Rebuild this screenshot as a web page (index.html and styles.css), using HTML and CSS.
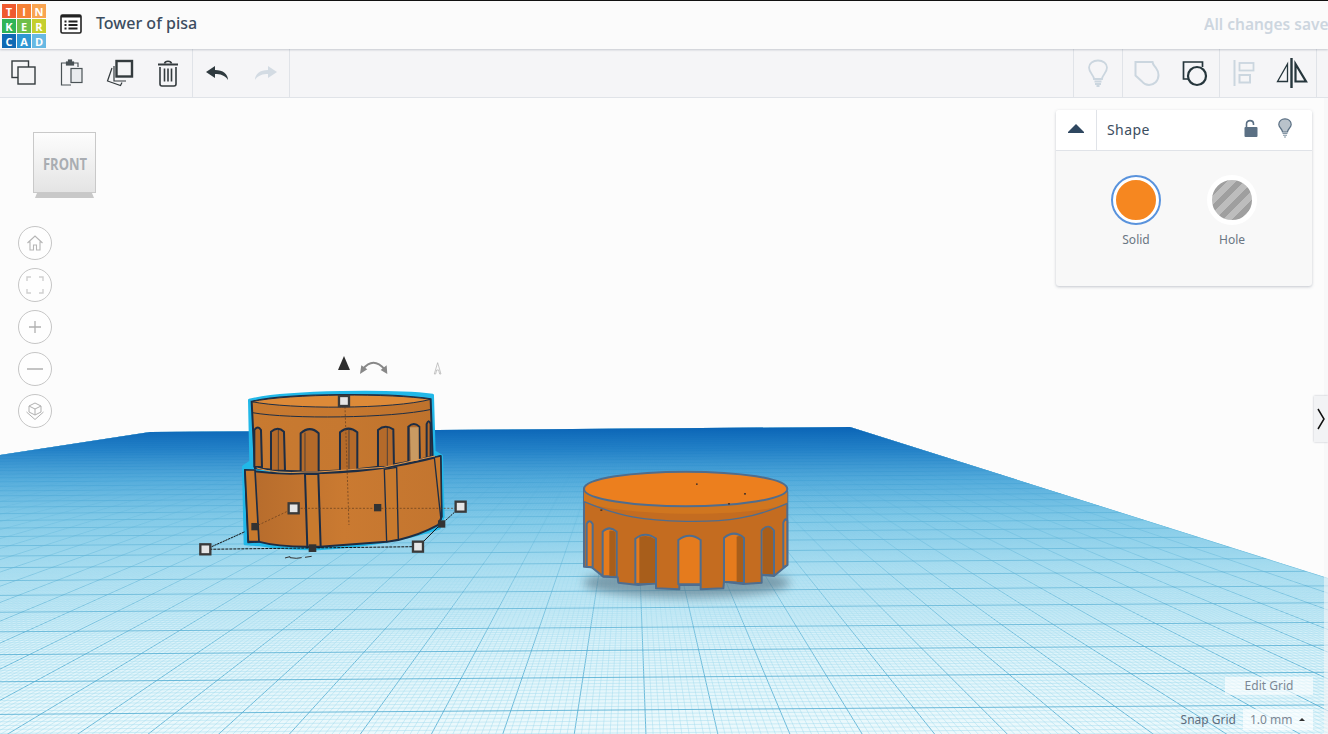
FILE: index.html
```html
<!DOCTYPE html>
<html lang="en">
<head>
<meta charset="utf-8">
<title>Tower of pisa</title>
<link rel="stylesheet" href="styles.css">
</head>
<body>
<div class="app">
  <header class="topbar">
    <div class="logo">
      <span class="t1">T</span><span class="t2">I</span><span class="t3">N</span>
      <span class="t4">K</span><span class="t5">E</span><span class="t6">R</span>
      <span class="t7">C</span><span class="t8">A</span><span class="t9">D</span>
    </div>
    <svg class="list-icon" width="22" height="20" viewBox="0 0 22 20">
      <rect x="1" y="1" width="20" height="18" rx="1.500" fill="#fff" stroke="#222" stroke-width="1.600"/>
      <rect x="1" y="1" width="20" height="2.500" fill="#222"/>
      <path d="M4.500 7.500h2M8.500 7.500h9M4.500 11h2M8.500 11h9M4.500 14.500h2M8.500 14.500h9" stroke="#222" stroke-width="2"/>
    </svg>
    <h1 class="title">Tower of pisa</h1>
    <div class="saved">All changes saved</div>
  </header>

  <nav class="toolbar">
    <div class="group">
      <button class="tool">
        <svg width="26" height="26" viewBox="0 0 26 26" fill="none" stroke="#343b3e" stroke-width="1.400"><rect x="1" y="1" width="16.500" height="16.500"/><rect x="7" y="7" width="17" height="17" fill="#f4f4f6"/></svg>
      </button>
      <button class="tool">
        <svg width="24" height="28" viewBox="0 0 24 28" fill="none" stroke="#4a5256" stroke-width="1.200"><path d="M6 4H1.500v22H11"/><path d="M14 4h4v4"/><rect x="6.500" y="3" width="7" height="3" fill="#4a5256"/><rect x="8.500" y="1" width="3" height="3" fill="#4a5256"/><rect x="11" y="9.500" width="11" height="14" fill="#e9ebee"/></svg>
      </button>
      <button class="tool">
        <svg width="28" height="28" viewBox="0 0 28 28" fill="none" stroke="#343b3e"><path d="M6 9L1.500 22l13 4.500 1.500-3" stroke-width="1.200"/><path d="M8 7v15h12" stroke-width="1.200"/><rect x="10.500" y="2" width="15.500" height="15.500" stroke-width="2.400" fill="#f4f4f6"/></svg>
      </button>
      <button class="tool">
        <svg width="22" height="28" viewBox="0 0 22 28" fill="none" stroke="#343b3e" stroke-width="1.600"><path d="M1 5.500h20" stroke-width="2"/><path d="M7.500 4.500C8 1.500 14 1.500 14.500 4.500"/><path d="M3 8v17c0 1.500 1 2 2 2h12c1 0 2-.5 2-2V8"/><path d="M7.500 9.500v13M11 9.500v13M14.500 9.500v13"/></svg>
      </button>
    </div>
    <div class="group">
      <button class="tool narrow">
        <svg width="23" height="14" viewBox="0 0 23 14"><path d="M9 0L0 6l9 6V8c5 0 10 1 13 6 0-6-5-10-13-10z" fill="#2f3a3f"/></svg>
      </button>
      <button class="tool narrow">
        <svg width="23" height="14" viewBox="0 0 23 14"><path d="M14 0l9 6-9 6V8C9 8 4 9 1 14c0-6 5-10 13-10z" fill="#d3dbe3"/></svg>
      </button>
    </div>
    <div class="spacer"></div>
    <div class="group left-rule">
      <button class="tool">
        <svg width="22" height="28" viewBox="0 0 22 28" fill="none" stroke="#cbd6df" stroke-width="1.800"><path d="M7 20c0-4-5-6-5-11.500C2 4.500 6 1.500 11 1.500s9 3 9 7C20 14 15 16 15 20z"/><path d="M7.500 22.500h7M8 25h6M9.500 27h3"/></svg>
      </button>
    </div>
    <div class="group">
      <button class="tool">
        <svg width="26" height="27" viewBox="0 0 26 27" fill="none" stroke="#cbd6df" stroke-width="2"><path d="M1.500 2h17c.5 3 2 4 3.500 6 1.500 2 2.500 4 2.500 7 0 6-4.500 10-9.500 10-3 0-5-1-7-3.500l-6.500-6z"/></svg>
      </button>
      <button class="tool">
        <svg width="26" height="27" viewBox="0 0 26 27" fill="none" stroke="#26363c"><path d="M7 19H1.500V2h19v5" stroke-width="1.700"/><circle cx="15" cy="16" r="9" stroke-width="2.200"/></svg>
      </button>
    </div>
    <div class="group right-end">
      <button class="tool">
        <svg width="22" height="27" viewBox="0 0 22 27" fill="none" stroke="#cbd6df"><path d="M1.500 0v26" stroke-width="2"/><rect x="6.500" y="3" width="14" height="7.500" stroke-width="1.800"/><rect x="6.500" y="15" width="10.500" height="7.500" stroke-width="2"/></svg>
      </button>
      <button class="tool">
        <svg width="32" height="32" viewBox="0 0 32 32" fill="none" stroke="#26363c"><path d="M15.500 1v30" stroke-width="2.400"/><path d="M11.500 7v17.500H1.500z" stroke-width="1.300"/><path d="M19.500 7v17.500H30z" stroke-width="2.200"/></svg>
      </button>
    </div>
  </nav>

  <main class="workspace">
    <svg class="scene" width="1328" height="636" viewBox="0 98 1328 636">
      <defs>
        <linearGradient id="plane" gradientUnits="userSpaceOnUse" x1="0" y1="427" x2="0" y2="734">
          <stop offset="0" stop-color="#0a6cc0"/>
          <stop offset=".1" stop-color="#2c90d2"/>
          <stop offset=".25" stop-color="#6fc0e6"/>
          <stop offset=".45" stop-color="#b4e2f3"/>
          <stop offset=".7" stop-color="#dcf3fa"/>
          <stop offset="1" stop-color="#ecf9fc"/>
        </linearGradient>
        <linearGradient id="haze" gradientUnits="userSpaceOnUse" x1="0" y1="427" x2="0" y2="660">
          <stop offset="0" stop-color="#0a64b6" stop-opacity="1"/>
          <stop offset=".1" stop-color="#1577c3" stop-opacity=".88"/>
          <stop offset=".23" stop-color="#3c9dd6" stop-opacity=".72"/>
          <stop offset=".4" stop-color="#6fc0e4" stop-opacity=".5"/>
          <stop offset=".65" stop-color="#a8dcf0" stop-opacity=".25"/>
          <stop offset="1" stop-color="#d0eef8" stop-opacity="0"/>
        </linearGradient>
        <linearGradient id="upper" x1="0" x2="1" y1="0" y2="0">
          <stop offset="0" stop-color="#c87a30"/>
          <stop offset=".5" stop-color="#c67830"/>
          <stop offset="1" stop-color="#be722c"/>
        </linearGradient>
        <linearGradient id="lower" x1="0" x2="1" y1="0" y2="0">
          <stop offset="0" stop-color="#b56b2c"/>
          <stop offset=".5" stop-color="#ca7a31"/>
          <stop offset="1" stop-color="#c3752f"/>
        </linearGradient>
        <linearGradient id="cube" x1="0" x2="0" y1="0" y2="1">
          <stop offset="0" stop-color="#fdfdfd"/>
          <stop offset="1" stop-color="#e4e4e4"/>
        </linearGradient>
        <clipPath id="planeClip"><path d="M0 455L150 432L850 427L1328 578V734H0Z"/></clipPath>
        <filter id="soft" x="-20%" y="-60%" width="140%" height="220%"><feGaussianBlur stdDeviation="14"/></filter>
      </defs>

      <path d="M0 455L150 432L850 427L1328 578V734H0Z" fill="url(#plane)"/>
      <g id="grid" clip-path="url(#planeClip)"></g>
      <path d="M0 455L150 432L850 427L1328 578V734H0Z" fill="url(#haze)"/>

      <!-- right object -->
      <g transform="translate(570 460) scale(.3333)">
        <ellipse cx="350" cy="368" rx="310" ry="46" fill="#54707f" opacity=".6" filter="url(#soft)"/>
        <path d="M42 85V320L65 322 100 350 143 352 145 368 205 375 258 370V385L328 388V375H392V388L460 385 462 365 520 372 575 368V345L612 348 640 325 652 315V95Z" fill="#c46c20" stroke="#4f6d8e" stroke-width="6" stroke-linejoin="round"/>
        <path d="M42 90V125C150 170 550 175 652 130V95Z" fill="#d0761f"/>
        <g fill="#e57b1d" stroke="#4f6d8e" stroke-width="6" stroke-linejoin="round">
          <path d="M50 320V192Q58 175 68 192V322Z"/>
          <path d="M98 348V215Q118 195 140 215V350Z"/>
          <path d="M196 372V236Q226 212 258 236V370Z"/>
          <path d="M325 373V240Q358 215 392 240V373Z"/>
          <path d="M462 365V234Q492 208 522 234V368Z"/>
          <path d="M575 343V212Q594 188 612 212V346Z"/>
          <path d="M640 322V188Q646 172 652 182V315Z"/>
        </g>
        <g fill="#a85e1b">
          <path d="M118 347V212Q130 210 137 217V348Z"/>
          <path d="M208 370V232Q232 222 255 237V368Z"/>
          <path d="M500 366V230Q512 225 519 235V366Z"/>
          <path d="M578 341V212Q594 192 609 212V343Z"/>
        </g>
        <path d="M42 125C150 170 220 182 347 184S550 175 652 130" fill="none" stroke="#4f6d8e" stroke-width="4"/>
        <path d="M42 87C42 55 190 35 347 35S652 55 652 87C652 118 500 139 347 139S42 118 42 87Z" fill="#ec7f1e" stroke="#4f6d8e" stroke-width="6"/>
        <g fill="#553a28"><rect x="378" y="70" width="5" height="5"/><rect x="522" y="99" width="6" height="5"/><rect x="474" y="129" width="6" height="5"/><rect x="91" y="148" width="6" height="5"/></g>
      </g>

      <!-- selected tower -->
      <g transform="translate(190 350) scale(.3333)">
        <path d="M178 150C300 122 610 122 728 135L733 305 755 318 760 500 748 535Q600 585 385 597 280 598 210 585L165 582 160 350 182 335Z" fill="#22b8e8" stroke="#22b8e8" stroke-width="8" stroke-linejoin="round"/>
        <path d="M185 155C300 130 610 130 722 148L728 320Q450 385 195 355Z" fill="url(#upper)" stroke="#1d2d44" stroke-width="6"/>
        <path d="M185 155C300 130 610 130 722 148C610 178 300 178 185 155Z" fill="#dd8a38" stroke="#1d2d44" stroke-width="3"/>
        <path d="M187 188C300 208 600 205 725 178" fill="none" stroke="#1d2d44" stroke-width="3"/>
        <g fill="#b46a2a" stroke="#1d2d44" stroke-width="6" stroke-linejoin="round">
          <path d="M193 350V240Q204 225 213 240L216 352Z"/>
          <path d="M243 362V245Q264 228 282 245L285 362Z"/>
          <path d="M332 365V250Q360 225 386 250V366Z"/>
          <path d="M450 365V247Q475 225 502 247V360Z"/>
          <path d="M564 352V240Q585 222 610 238L612 350Z"/>
          <path d="M655 338V230Q672 214 688 230L690 335Z"/>
          <path d="M710 325V222Q716 205 722 222V320Z"/>
        </g>
        <g stroke="#1d2d44" stroke-width="2"><path d="M265 240V362M345 248V365M477 240V360M592 232V350M660 232V338"/></g>
        <path d="M660 232H686V334H662Z" fill="#c99a62"/>

        <path d="M165 360Q260 375 345 370 560 370 752 318L755 500 745 525Q690 555 625 570L590 575 390 590H352Q260 590 205 575L175 577Z" fill="url(#lower)" stroke="#1d2d44" stroke-width="6" stroke-linejoin="round"/>
        <g fill="#c87a2e" stroke="#1d2d44" stroke-width="3">
          <path d="M165 360H195L207 575H175Z" stroke-width="5"/>
          <path d="M345 372H385L392 590H352Z" stroke-width="6"/>
          <path d="M583 358L620 352 625 568 590 575Z" stroke-width="4"/>
          <path d="M733 322L752 318 755 500 753 510Z" stroke-width="4"/>
        </g>
        <path d="M200 354Q260 372 345 366L385 366 580 352 735 318" fill="none" stroke="#e69a4c" stroke-width="3"/>

        <g fill="none" stroke="#5e3a1c" stroke-width="2" stroke-dasharray="6 5">
          <path d="M465 170L477 525"/>
          <path d="M310 475H812"/>
          <path d="M195 530L311 475"/>
        </g>
        <g fill="none" stroke="#111" stroke-width="3">
          <path d="M46 598L684 590" stroke-dasharray="9 3"/>
          <path d="M65 590L165 545" stroke-dasharray="7 2"/>
          <path d="M700 575L745 530"/>
          <path d="M755 522L812 470" stroke-dasharray="6 3"/>
        </g>
        <g fill="#e6e6e6" stroke="#3a3a3a" stroke-width="7">
          <rect x="447" y="138" width="30" height="30"/>
          <rect x="296" y="460" width="30" height="30"/>
          <rect x="797" y="455" width="30" height="30"/>
          <rect x="31" y="583" width="30" height="30"/>
          <rect x="669" y="575" width="30" height="30"/>
        </g>
        <g fill="#333">
          <rect x="184" y="519" width="22" height="22"/>
          <rect x="552" y="462" width="22" height="22"/>
          <rect x="744" y="511" width="22" height="22"/>
          <rect x="356" y="583" width="23" height="23"/>
        </g>
        <path d="M285 624L300 620V623Q320 627 335 623M345 622L365 619" fill="none" stroke="#333" stroke-width="3"/>
        <path d="M462 18L480 60H444Z" fill="#2d2d2d"/>
        <path d="M518 58Q550 18 584 58" fill="none" stroke="#888" stroke-width="6"/>
        <path d="M510 72L514 46 532 58ZM592 72L572 60 590 46Z" fill="#888"/>
        <path d="M743 38L753 72H749L746 60H740L737 72H733Z" fill="none" stroke="#aaa" stroke-width="2"/>
      </g>

      <!-- view cube -->
      <g>
        <path d="M37 193L92 193 94 198 35 198Z" fill="#c8c8c8"/>
        <rect x="33.500" y="132.500" width="62" height="60" fill="url(#cube)" stroke="#c9c9c9"/>
        <text x="43" y="170" class="cube-label" textLength="44" lengthAdjust="spacingAndGlyphs">FRONT</text>
      </g>
    </svg>

    <div class="view-controls">
      <button class="round">
        <svg width="18" height="18" viewBox="0 0 18 18" fill="none" stroke="#b5b5b5" stroke-width="1.100"><path d="M1.500 9L9 2l7.500 7M4 7.500V16h3.500v-5h3v5H14V7.500"/></svg>
      </button>
      <button class="round">
        <svg width="18" height="18" viewBox="0 0 18 18" fill="none" stroke="#cfcfcf" stroke-width="1.400"><path d="M1 5V1h4M13 1h4v4M17 13v4h-4M5 17H1v-4"/></svg>
      </button>
      <button class="round">
        <svg width="14" height="14" viewBox="0 0 14 14" stroke="#b0b0b0" stroke-width="1.300"><path d="M7 1v12M1 7h12"/></svg>
      </button>
      <button class="round">
        <svg width="16" height="4" viewBox="0 0 16 4" stroke="#b0b0b0" stroke-width="1.500"><path d="M0 2h16"/></svg>
      </button>
      <button class="round">
        <svg width="20" height="20" viewBox="0 0 20 20" fill="none" stroke="#b0b0b0" stroke-width="1"><path d="M10 2l6 3v6l-6 3-6-3V5zM4 5l6 3 6-3M10 8v6"/><path d="M1.500 11L10 18.500 18.500 11"/></svg>
      </button>
    </div>

    <section class="panel">
      <div class="panel-head">
        <div class="collapse"><svg width="16" height="9" viewBox="0 0 16 9"><path d="M8 0l8 8v1H0V8z" fill="#2f4760"/></svg></div>
        <div class="panel-title">Shape</div>
        <svg class="lock" width="14" height="18" viewBox="0 0 14 18"><path d="M2.500 8V5c0-4.500 7-4.500 7 0v1" fill="none" stroke="#5b7084" stroke-width="1.600"/><rect x="0.500" y="8" width="13" height="10" rx="1" fill="#5b7084"/></svg>
        <svg class="bulb" width="14" height="20" viewBox="0 0 14 20"><path d="M4.500 14C4.500 11 .8 9.500 .8 6.500 .8 3 3.500 .8 7 .8s6.200 2.200 6.200 5.700C13.200 9.500 9.500 11 9.500 14z" fill="#b9c2cb" stroke="#5b7084" stroke-width="1.200"/><path d="M4.500 15.500h5M5 17.300h4M6 19h2" stroke="#8495a4" stroke-width="1.100"/></svg>
      </div>
      <div class="panel-body">
        <div class="option">
          <span class="swatch solid"></span>
          <span class="option-label">Solid</span>
        </div>
        <div class="option">
          <span class="swatch hole"></span>
          <span class="option-label">Hole</span>
        </div>
      </div>
    </section>

    <div class="side-strip"></div>
    <button class="side-tab"><svg width="9" height="22" viewBox="0 0 9 22" fill="none" stroke="#111" stroke-width="1.500"><path d="M1 1l6 10-6 10"/></svg></button>

    <div class="grid-controls">
      <button class="edit-grid">Edit Grid</button>
      <div class="snap">
        <span class="snap-label">Snap Grid</span>
        <span class="snap-value">1.0 mm<i class="caret"></i></span>
      </div>
    </div>
  </main>
</div>
<script src="grid.js"></script>
</body>
</html>
```

FILE: styles.css
```css
* { box-sizing: border-box; }
html, body { margin: 0; height: 100%; overflow: hidden; }
body { font-family: "Noto Sans", "Open Sans", sans-serif; background: #fcfcfc; color: #3c4d60; }
button { font: inherit; background: none; border: 0; padding: 0; }

.app { width: 1328px; height: 734px; display: flex; flex-direction: column; }

.topbar { flex: none; height: 49px; display: flex; align-items: center; padding-left: 2px; background: #fbfbfb; border-top: 1px solid #111; box-shadow: 0 1px 2px rgba(60,70,90,.25); position: relative; z-index: 2; }
.logo { width: 44px; height: 44px; margin-top: 2px; display: grid; grid-template-columns: repeat(3, 1fr); grid-template-rows: repeat(3, 1fr); gap: 1px; flex: none; }
.logo span { display: flex; align-items: center; justify-content: center; color: #fff; font-size: 11px; font-weight: 700; font-family: "Open Sans", sans-serif; line-height: 1; }
.t1 { background: #ef5a2f; } .t2 { background: #f58034; } .t3 { background: #f9a450; }
.t4 { background: #2fb457; } .t5 { background: #6fbf4a; } .t6 { background: #c5cf2e; }
.t7 { background: #0f6ab4; } .t8 { background: #2f97d3; } .t9 { background: #68b9e3; }
.list-icon { margin: 0 0 3px 14px; flex: none; }
.title { margin: 0 0 4px 14px; font-size: 16px; font-weight: 500; color: #3c4d60; line-height: 1; }
.saved { margin: 0 0 2px auto; width: 124px; overflow: hidden; white-space: nowrap; font-size: 15.500px; font-weight: 600; color: #cdd6df; flex: none; }

.toolbar { flex: none; height: 49px; display: flex; align-items: stretch; background: #f5f5f7; border-bottom: 1px solid #e0e3e8; position: relative; z-index: 1; }
.group { display: flex; border-right: 1px solid #e0e3e8; }
.left-rule { border-left: 1px solid #e0e3e8; }
.right-end { margin-right: 11px; }
.spacer { flex: 1; }
.tool { width: 48px; display: flex; align-items: center; justify-content: center; }
.narrow { width: 48px; }

.workspace { flex: 1; position: relative; overflow: hidden; background: #fcfcfc; }
.scene { position: absolute; left: 0; top: 0; display: block; }
.cube-label { font-family: "Open Sans", sans-serif; font-size: 16px; font-weight: 700; fill: #a9adb2; }

.view-controls { position: absolute; left: 18px; top: 128px; display: flex; flex-direction: column; gap: 8px; }
.round { width: 34px; height: 34px; border: 1px solid #c6c6c6; border-radius: 50%; display: flex; align-items: center; justify-content: center; background: rgba(255,255,255,.6); }

.panel { position: absolute; left: 1056px; top: 12px; width: 256px; height: 176px; background: #f8f8f8; border-radius: 3px; box-shadow: 0 1px 3px rgba(90,100,120,.35); overflow: hidden; }
.panel-head { height: 41px; display: flex; align-items: center; background: #fff; border-bottom: 1px solid #e0e3e8; }
.collapse { width: 41px; height: 100%; display: flex; align-items: center; justify-content: center; border-right: 1px solid #e0e3e8; padding-bottom: 3px; }
.panel-title { flex: 1; padding: 0 0 2px 10px; font-size: 14px; letter-spacing: .4px; color: #3c4d60; }
.lock { margin-right: 20px; margin-bottom: 5px; }
.bulb { margin-right: 20px; margin-bottom: 5px; }
.panel-body { display: flex; padding: 24px 0 0 55px; gap: 46px; }
.option { width: 50px; display: flex; flex-direction: column; align-items: center; gap: 7px; }
.swatch { width: 50px; height: 50px; border-radius: 50%; display: block; border: 5px solid #fff; }
.solid { background: #f68720; border-color: #fff; outline: 2px solid #5a93dc; outline-offset: -2px; }
.hole { background: repeating-linear-gradient(135deg, #bdbdbd 0 6px, #9f9f9f 6px 12px); }
.option-label { font-size: 12px; line-height: 16px; color: #6a7683; }

.side-strip { position: absolute; right: 0; top: 0; bottom: 0; width: 4px; background: rgba(245,245,247,.6); }
.side-tab { position: absolute; right: 0; top: 298px; width: 14px; height: 46px; display: flex; align-items: center; justify-content: center; background: #f2f3f5; box-shadow: 0 0 2px rgba(90,100,120,.4); }

.grid-controls { position: absolute; right: 15px; bottom: 4px; display: flex; flex-direction: column; align-items: flex-end; gap: 14px; }
.edit-grid { width: 88px; height: 18px; background: rgba(255,255,255,.6); font-size: 12px; line-height: 18px; color: #7c8894; text-align: center; }
.snap { display: flex; align-items: center; gap: 7px; }
.snap-label { font-size: 12px; color: #5d6d7d; }
.snap-value { width: 70px; height: 21px; display: flex; align-items: center; padding-left: 7px; gap: 6px; background: rgba(255,255,255,.65); font-size: 12px; color: #7c8894; }
.caret { width: 0; height: 0; border-left: 3px solid transparent; border-right: 3px solid transparent; border-bottom: 3px solid #333; }
```

FILE: grid.js
```js
// Perspective build-plate grid: lines radiate from one vanishing point and
// cross lines join equal depths on the plate's left and right edges.
(function () {
  var NS = 'http://www.w3.org/2000/svg';
  var g = document.getElementById('grid');
  var V = [632, 358], A = [150, 432], B = [850, 427];
  var k = 0.0205;
  var majors = 52;
  var sub = 10;

  function line(x1, y1, x2, y2, major) {
    var l = document.createElementNS(NS, 'line');
    l.setAttribute('x1', x1.toFixed(1));
    l.setAttribute('y1', y1.toFixed(1));
    l.setAttribute('x2', x2.toFixed(1));
    l.setAttribute('y2', y2.toFixed(1));
    l.setAttribute('stroke', major ? '#55aed2' : '#a2dbee');
    l.setAttribute('stroke-opacity', major ? 0.85 : 0.6);
    l.setAttribute('stroke-width', major ? 1 : 0.8);
    g.appendChild(l);
  }

  var T = 12;
  for (var i = 0; i <= majors * sub; i++) {
    var u = i / (majors * sub);
    var px = A[0] + u * (B[0] - A[0]);
    var py = A[1] + u * (B[1] - A[1]);
    line(px, py, V[0] + T * (px - V[0]), V[1] + T * (py - V[1]), i % sub === 0);
  }
  for (var j = 0; j <= 42 * sub; j++) {
    var t = 1 / (1 - (j / sub) * k);
    line(V[0] + t * (A[0] - V[0]), V[1] + t * (A[1] - V[1]),
      V[0] + t * (B[0] - V[0]), V[1] + t * (B[1] - V[1]), j % sub === 0);
  }
})();
```
